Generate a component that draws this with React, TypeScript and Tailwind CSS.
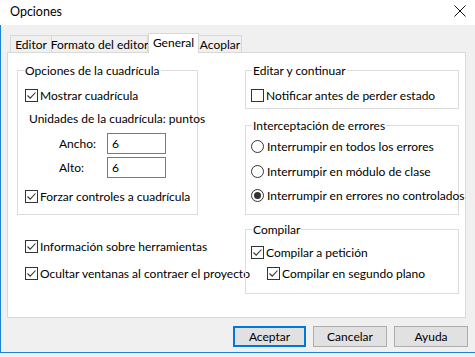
import React from "react";

const Check = ({ checked = true }: { checked?: boolean }) => (
  <span className="flex h-[13px] w-[13px] shrink-0 items-center justify-center border border-[#333333] bg-white">
    {checked && (
      <svg width="11" height="11" viewBox="0 0 11 11">
        <path d="M1.5 5.5 L4.2 8.2 L9.5 2.5" fill="none" stroke="#333333" strokeWidth="1.1" />
      </svg>
    )}
  </span>
);

const Radio = ({ checked = false }: { checked?: boolean }) => (
  <span className="flex h-[13px] w-[13px] shrink-0 items-center justify-center rounded-full border border-[#333333] bg-white">
    {checked && <span className="h-[7px] w-[7px] rounded-full bg-[#333333]" />}
  </span>
);

const CheckRow = ({ label, checked = true, className = "" }: { label: string; checked?: boolean; className?: string }) => (
  <div className={`flex h-[15px] items-center gap-[2px] whitespace-nowrap ${className}`}>
    <Check checked={checked} />
    <span>{label}</span>
  </div>
);

const RadioRow = ({ label, checked = false, className = "" }: { label: string; checked?: boolean; className?: string }) => (
  <div className={`flex h-[15px] items-center gap-[3px] whitespace-nowrap ${className}`}>
    <Radio checked={checked} />
    <span>{label}</span>
  </div>
);

const Group = ({ title, className = "", children }: { title: string; className?: string; children: React.ReactNode }) => (
  <div className={`relative border border-[#dcdcdc] ${className}`}>
    <span className="absolute -top-[8px] left-[6px] whitespace-nowrap bg-white px-[1px] leading-[15px]">{title}</span>
    {children}
  </div>
);

export default function App() {
  return (
    <div className="relative h-[357px] w-[475px] overflow-hidden bg-[#f0f0f0] text-[12px] leading-[15px] text-black [font-family:Lato,sans-serif]">
      {/* title bar */}
      <div className="flex h-[25px] items-center justify-between bg-white pb-[3px] pl-[10px] pr-[9px]">
        <span className="text-[12.5px]">Opciones</span>
        <svg width="12" height="12" viewBox="0 0 12 12">
          <path d="M0.5 0.5 L11.5 11.5 M11.5 0.5 L0.5 11.5" stroke="#111" strokeWidth="1" />
        </svg>
      </div>

      <div className="h-[328px] border-b border-l border-[#1883d7]">
        {/* tabs */}
        <div className="flex h-[27px] items-end pl-[9px] pt-[8px] whitespace-nowrap">
          <div className="flex h-[17px] w-[42px] items-center justify-center border border-b-0 border-[#d9d9d9]">Editor</div>
          <div className="flex h-[17px] w-[96px] items-center justify-center border border-b-0 border-l-0 border-[#d9d9d9]">Formato del editor</div>
          <div className="relative z-10 -mb-[1px] flex h-[20px] w-[51px] items-center justify-center border border-b-0 border-[#d9d9d9] bg-white pb-[2px]">General</div>
          <div className="flex h-[17px] w-[43px] items-center justify-center border border-b-0 border-l-0 border-[#d9d9d9]">Acoplar</div>
        </div>

        {/* panel */}
        <div className="ml-[6px] flex h-[266px] w-[459px] border border-[#d9d9d9] bg-white pl-[9px] pt-[17px]">
          {/* left column */}
          <div className="w-[181px]">
            <Group title="Opciones de la cuadrícula" className="h-[145px] pl-[7px]">
              <CheckRow label="Mostrar cuadrícula" className="mt-[17px]" />
              <div className="ml-[4px] mt-[8px] h-[15px] whitespace-nowrap">Unidades de la cuadrícula: puntos</div>
              <div className="mt-[7px] flex items-center">
                <span className="ml-[34px] w-[48px]">Ancho:</span>
                <div className="flex h-[21px] w-[59px] items-center border border-[#7a7a7a] pl-[4px]">6</div>
              </div>
              <div className="mt-[3px] flex items-center">
                <span className="ml-[34px] w-[48px]">Alto:</span>
                <div className="flex h-[21px] w-[59px] items-center border border-[#7a7a7a] pl-[4px]">6</div>
              </div>
              <CheckRow label="Forzar controles a cuadrícula" className="mt-[11px]" />
            </Group>
            <div className="pl-[8px]">
              <CheckRow label="Información sobre herramientas" className="mt-[24px]" />
              <CheckRow label="Ocultar ventanas al contraer el proyecto" className="mt-[12px]" />
            </div>
          </div>

          {/* right column */}
          <div className="ml-[47px] w-[214px]">
            <Group title="Editar y continuar" className="h-[39px] pl-[5px]">
              <CheckRow label="Notificar antes de perder estado" checked={false} className="mt-[17px]" />
            </Group>
            <Group title="Interceptación de errores" className="mt-[16px] h-[90px] pl-[5px]">
              <RadioRow label="Interrumpir en todos los errores" className="mt-[13px]" />
              <RadioRow label="Interrumpir en módulo de clase" className="mt-[10px]" />
              <RadioRow label="Interrumpir en errores no controlados" checked className="mt-[9px]" />
            </Group>
            <Group title="Compilar" className="mt-[14px] h-[65px] pl-[5px]">
              <CheckRow label="Compilar a petición" className="mt-[15px]" />
              <CheckRow label="Compilar en segundo plano" className="ml-[16px] mt-[6px]" />
            </Group>
          </div>
        </div>

        {/* buttons */}
        <div className="mt-[8px] flex justify-end gap-[7px] pr-[7px]">
          <button className="h-[21px] w-[73px] border-2 border-[#0078d7] bg-[#e1e1e1]">Aceptar</button>
          <button className="h-[21px] w-[74px] border border-[#adadad] bg-[#e1e1e1]">Cancelar</button>
          <button className="h-[21px] w-[74px] border border-[#adadad] bg-[#e1e1e1]">Ayuda</button>
        </div>
      </div>
    </div>
  );
}
